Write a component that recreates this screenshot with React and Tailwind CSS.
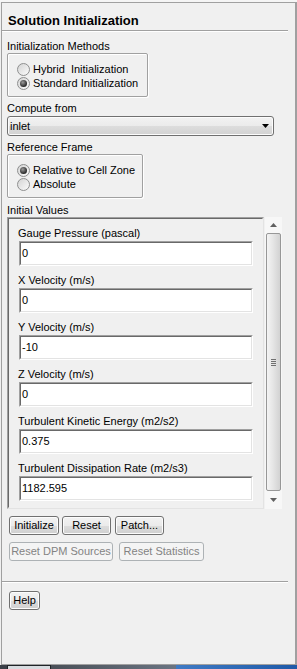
import React from 'react';

const fields = [
  ['Gauge Pressure (pascal)', '0'],
  ['X Velocity (m/s)', '0'],
  ['Y Velocity (m/s)', '-10'],
  ['Z Velocity (m/s)', '0'],
  ['Turbulent Kinetic Energy (m2/s2)', '0.375'],
  ['Turbulent Dissipation Rate (m2/s3)', '1182.595'],
];

const Radio = ({ checked, label }) => (
  <div className="flex items-center h-[14px]">
    <span className="w-[13px] h-[13px] rounded-full border border-[#8e8f8f] bg-[linear-gradient(135deg,#d4d4d4,#fbfbfb)] flex items-center justify-center">
      {checked && (
        <span className="w-[7px] h-[7px] rounded-full bg-[radial-gradient(circle_at_40%_35%,#9a9a9a,#202020_75%)]" />
      )}
    </span>
    <span className="ml-[3px] leading-[13px] whitespace-pre">{label}</span>
  </div>
);

const GroupBox = ({ className, children }) => (
  <div className={`border border-[#a0a0a0] rounded-[2px] shadow-[inset_1px_1px_0_#fff,1px_1px_0_#fff] pl-[9px] pt-[8px] ${className}`}>
    {children}
  </div>
);

const Btn = ({ className, disabled, children }) => (
  <button
    type="button"
    className={`h-[19px] rounded-[3px] border text-[11px] leading-[15px] text-center ${
      disabled
        ? 'border-[#adb2b5] bg-[#f4f4f4] text-[#838383]'
        : 'border-[#707070] bg-[linear-gradient(#f2f2f2_0%,#ebebeb_50%,#dddddd_51%,#cfcfcf_100%)] shadow-[inset_0_0_0_1px_#fcfcfc] text-black'
    } ${className}`}
  >
    {children}
  </button>
);

const Field = ({ label, value }) => (
  <div className="flex flex-col mb-[8px] last:mb-0">
    <div className="leading-[13px]">{label}</div>
    <div className="ml-[1px] mt-[1px] w-[234px] h-[25px] border border-t-[#a0a0a0] border-l-[#a0a0a0] border-r-white border-b-white">
      <div className="h-full border border-t-[#696969] border-l-[#696969] border-r-[#e3e3e3] border-b-[#e3e3e3] bg-white pl-[1px] flex items-center leading-[13px]">
        {value}
      </div>
    </div>
  </div>
);

export default function App() {
  return (
    <div className="w-[297px] h-[669px] bg-[#f0f0f0] flex flex-col font-['Liberation_Sans',Arial,sans-serif] text-[11px] text-black overflow-hidden">
      <div className="h-[2px] bg-[#f5f5f5]" />
      <div className="ml-[1px] h-[663px] border-t border-l border-b border-r-2 border-[#a0a0a0] flex flex-col">
        <div className="pl-[6px] pt-[10px] h-[27px] text-[13px] font-bold leading-[16px]">Solution Initialization</div>
        <div className="w-[286px] h-[1px] bg-[#a0a0a0]" />
        <div className="w-[286px] h-[1px] bg-white" />

        <div className="pl-[5px] flex flex-col items-start">
          <div className="mt-[8px] leading-[13px]">Initialization Methods</div>
          <GroupBox className="w-[141px] h-[44px]">
            <Radio label="Hybrid  Initialization" />
            <Radio checked label="Standard Initialization" />
          </GroupBox>

          <div className="mt-[5px] leading-[13px]">Compute from</div>
          <div className="mt-[1px] w-[267px] h-[20px] rounded-[3px] border border-[#707070] bg-[linear-gradient(#f2f2f2_0%,#ebebeb_50%,#dddddd_51%,#d2d2d2_100%)] shadow-[inset_0_0_0_1px_#fcfcfc] flex items-center justify-between pl-[2px] pr-[4px]">
            <span className="leading-[13px]">inlet</span>
            <svg width="7" height="4" viewBox="0 0 7 4"><path d="M0 0h7L3.5 4z" fill="#000" /></svg>
          </div>

          <div className="mt-[5px] leading-[13px]">Reference Frame</div>
          <GroupBox className="w-[136px] h-[44px]">
            <Radio checked label="Relative to Cell Zone" />
            <Radio label="Absolute" />
          </GroupBox>

          <div className="mt-[6px] leading-[13px]">Initial Values</div>
          <div className="flex h-[292px]">
            <div className="w-[257px] h-full border border-[#a0a0a0] border-r-[#e3e3e3] border-b-[#e3e3e3]">
              <div className="h-full border border-[#696969] border-r-[#f0f0f0] border-b-[#f0f0f0] pl-[9px] pt-[8px] overflow-hidden">
                {fields.map(([l, v]) => (
                  <Field key={l} label={l} value={v} />
                ))}
              </div>
            </div>
            <div className="ml-[1px] w-[17px] h-full bg-[#f7f7f7] flex flex-col items-center">
              <div className="h-[16px] flex items-center justify-center">
                <svg width="7" height="4" viewBox="0 0 7 4"><path d="M3.5 0L7 4H0z" fill="#606060" /></svg>
              </div>
              <div className="w-[15px] h-[258px] rounded-[2px] border border-[#979797] bg-[linear-gradient(90deg,#f4f4f4,#e4e4e4_50%,#d2d2d2)] flex flex-col items-center justify-center gap-[1px]">
                <span className="w-[5px] h-[1px] bg-[#707070]" />
                <span className="w-[5px] h-[1px] bg-[#707070]" />
                <span className="w-[5px] h-[1px] bg-[#707070]" />
                <span className="w-[5px] h-[1px] bg-[#707070]" />
              </div>
              <div className="flex-1 flex items-center justify-center">
                <svg width="7" height="4" viewBox="0 0 7 4"><path d="M0 0h7L3.5 4z" fill="#606060" /></svg>
              </div>
            </div>
          </div>

          <div className="mt-[7px] ml-[2px] flex">
            <Btn className="w-[50px]">Initialize</Btn>
            <Btn className="w-[49px] ml-[3px]">Reset</Btn>
            <Btn className="w-[49px] ml-[4px]">Patch...</Btn>
          </div>
          <div className="mt-[7px] ml-[2px] flex">
            <Btn disabled className="w-[104px]">Reset DPM Sources</Btn>
            <Btn disabled className="w-[85px] ml-[6px]">Reset Statistics</Btn>
          </div>
        </div>

        <div className="mt-[20px] w-[286px] h-[1px] bg-[#a0a0a0]" />
        <div className="w-[286px] h-[1px] bg-white" />
        <div className="pl-[7px] mt-[8px] flex">
          <Btn className="w-[31px]">Help</Btn>
        </div>
      </div>
      <div className="h-[4px] flex">
        <div className="w-[7px] bg-[#3b4048]" />
        <div className="w-[44px] bg-[#d8dce0] border-t border-x border-[#202428]" />
        <div className="w-[125px] bg-[linear-gradient(90deg,#4a5058,#6a7482)]" />
        <div className="flex-1 bg-[linear-gradient(90deg,#3f7ac4,#1f5aa8)]" />
      </div>
    </div>
  );
}
